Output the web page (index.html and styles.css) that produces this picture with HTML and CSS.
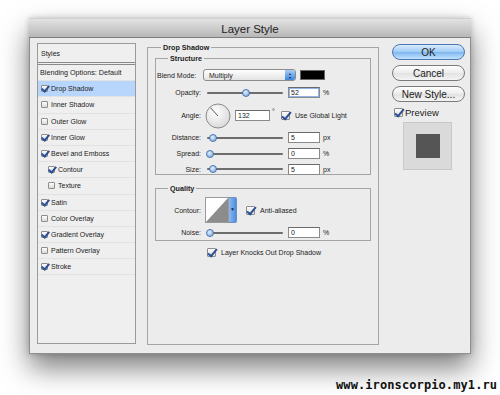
FILE: index.html
```html
<!DOCTYPE html>
<html lang="en">
<head>
  <meta charset="UTF-8">
  <title>Layer Style</title>
  <link rel="stylesheet" href="styles.css">
</head>
<body>

  <div class="window">
    <div class="titlebar">Layer Style</div>

    <div class="content">
      <div class="styles-list">
        <div class="list-head">Styles</div>
        <div class="list-row plain">Blending Options: Default</div>
        <div class="list-row selected"><span class="cb on"></span>Drop Shadow</div>
        <div class="list-row"><span class="cb"></span>Inner Shadow</div>
        <div class="list-row"><span class="cb"></span>Outer Glow</div>
        <div class="list-row"><span class="cb on"></span>Inner Glow</div>
        <div class="list-row"><span class="cb on"></span>Bevel and Emboss</div>
        <div class="list-row sub"><span class="cb on"></span>Contour</div>
        <div class="list-row sub"><span class="cb"></span>Texture</div>
        <div class="list-row"><span class="cb on"></span>Satin</div>
        <div class="list-row"><span class="cb"></span>Color Overlay</div>
        <div class="list-row"><span class="cb on"></span>Gradient Overlay</div>
        <div class="list-row"><span class="cb"></span>Pattern Overlay</div>
        <div class="list-row"><span class="cb on"></span>Stroke</div>
      </div>

      <fieldset class="group main">
        <legend>Drop Shadow</legend>

        <fieldset class="group inner structure">
          <legend>Structure</legend>

          <div class="row blend">
            <span class="label left">Blend Mode:</span>
            <span class="select">Multiply<span class="arrows">&#9650;<br>&#9660;</span></span>
            <span class="swatch"></span>
          </div>

          <div class="row opacity">
            <span class="label">Opacity:</span>
            <span class="slider"><span class="thumb" style="left: 48%"></span></span>
            <span class="field sel">52</span>
            <span class="unit">%</span>
          </div>

          <div class="row angle">
            <span class="label">Angle:</span>
            <svg class="dial" width="26" height="26" viewBox="0 0 26 26">
              <defs>
                <radialGradient id="dialfill" cx="40%" cy="35%" r="70%">
                  <stop offset="0" stop-color="#ffffff"/>
                  <stop offset="1" stop-color="#d8d8d8"/>
                </radialGradient>
              </defs>
              <circle cx="13" cy="13" r="12" fill="url(#dialfill)" stroke="#8a8a8a" stroke-width="1"/>
              <line x1="13" y1="13" x2="5.5" y2="4.7" stroke="#555" stroke-width="1"/>
            </svg>
            <span class="field wide">132</span>
            <span class="unit deg">&deg;</span>
            <span class="cb big on"></span>
            <span class="check-text">Use Global Light</span>
          </div>

          <div class="row distance">
            <span class="label">Distance:</span>
            <span class="slider"><span class="thumb" style="left: 4%"></span></span>
            <span class="field">5</span>
            <span class="unit">px</span>
          </div>

          <div class="row spread">
            <span class="label">Spread:</span>
            <span class="slider"><span class="thumb" style="left: 0%"></span></span>
            <span class="field">0</span>
            <span class="unit">%</span>
          </div>

          <div class="row size">
            <span class="label">Size:</span>
            <span class="slider"><span class="thumb" style="left: 4%"></span></span>
            <span class="field">5</span>
            <span class="unit">px</span>
          </div>
        </fieldset>

        <fieldset class="group inner quality">
          <legend>Quality</legend>

          <div class="row contour">
            <span class="label">Contour:</span>
            <span class="curve">
              <svg width="24" height="26" viewBox="0 0 24 26">
                <rect x="0.5" y="0.5" width="23" height="25" fill="#fff" stroke="#9a9a9a"/>
                <polygon points="1,25 23,1 23,25" fill="#8c8c8c"/>
              </svg>
              <span class="drop">&#9660;</span>
            </span>
            <span class="cb big on"></span>
            <span class="check-text">Anti-aliased</span>
          </div>

          <div class="row noise">
            <span class="label">Noise:</span>
            <span class="slider"><span class="thumb" style="left: 0%"></span></span>
            <span class="field">0</span>
            <span class="unit">%</span>
          </div>
        </fieldset>

        <div class="knockout">
          <span class="cb big on"></span>
          <span class="check-text">Layer Knocks Out Drop Shadow</span>
        </div>
      </fieldset>

      <div class="actions">
        <div class="btn default">OK</div>
        <div class="btn">Cancel</div>
        <div class="btn">New Style...</div>
        <div class="preview-toggle"><span class="cb big on"></span>Preview</div>
        <div class="preview"><div class="preview-square"></div></div>
      </div>
    </div>
  </div>

  <div class="watermark">www.ironscorpio.my1.ru</div>

</body>
</html>
```

FILE: styles.css
```css
* {
  box-sizing: border-box;
}
body {
  margin: 0;
  background: #fff;
  font-family: 'Liberation Sans', Arial, sans-serif;
  color: #222;
  padding: 18px 0 0 29px;
  width: 500px;
  height: 395px;
  overflow: hidden;
}

.window {
  width: 442px;
  height: 336px;
  background: #ececec;
  border: 1px solid #8f8f8f;
  border-top: none;
  box-shadow: 0 14px 26px rgba(0, 0, 0, 0.5), 0 0 6px rgba(0, 0, 0, 0.2);
}
.titlebar {
  height: 20px;
  line-height: 20px;
  text-align: center;
  font-size: 11.5px;
  color: #222;
  background: linear-gradient(#e2e2e2, #b8b8b8);
  border-bottom: 1px solid #7d7d7d;
  border-top: 1px solid #d0d0d0;
  margin: 0 -1px;
}

.content {
  display: flex;
  padding: 5px 0 0 7px;
}

/* left list */
.styles-list {
  width: 99px;
  height: 301px;
  border: 1px solid #9a9a9a;
  background: #efefef;
  font-size: 7px;
}
.list-head {
  height: 21px;
  line-height: 20px;
  padding-left: 3px;
  border-bottom: 3px double #8a8a8a;
}
.list-row {
  height: 16.2px;
  display: flex;
  align-items: center;
  padding-left: 3px;
  border-bottom: 1px solid #e2e2e2;
}
.list-row.plain {
  padding-left: 2px;
  font-size: 7.2px;
}
.list-row.sub {
  padding-left: 10px;
}
.list-row.selected {
  background: #b8d6fb;
}

/* checkboxes */
.cb {
  display: inline-block;
  width: 7px;
  height: 7px;
  margin-right: 3px;
  background: linear-gradient(#fdfdfd, #dcdcdc);
  border: 1px solid #8c8c8c;
  border-radius: 1px;
  position: relative;
  flex-shrink: 0;
}
.cb.on::after {
  content: "";
  position: absolute;
  left: 1px;
  top: -2px;
  width: 3px;
  height: 6px;
  border: solid #2a4f95;
  border-width: 0 2px 2px 0;
  transform: rotate(40deg);
}
.cb.big {
  width: 9px;
  height: 9px;
}
.cb.big.on::after {
  left: 2px;
  top: -2px;
  width: 3px;
  height: 8px;
}

/* groups */
.group {
  margin: 0;
  border: 1px solid #a4a4a4;
  font-size: 7px;
}
.group legend {
  font-weight: bold;
  font-size: 7.2px;
  padding: 0 2px;
  margin-left: 12px;
}
.main {
  margin-left: 11px;
  margin-top: 0;
  width: 232px;
  height: 302px;
  padding: 2px 7px 0 7px;
}
.main > legend {
  margin-left: 6px;
}
.inner {
  margin-left: 0;
  padding: 0;
}
.structure {
  height: 121px;
  padding-top: 4px;
}
.quality {
  margin-top: 9px;
  height: 57px;
  padding-top: 3px;
}

.row {
  display: flex;
  align-items: center;
  height: 16px;
}
.row.opacity {
  height: 19px;
}
.row.angle {
  height: 27px;
}
.row.distance {
  height: 17px;
}
.row.spread {
  height: 15px;
}
.label {
  width: 45px;
  text-align: right;
  margin-right: 4px;
  flex-shrink: 0;
}
.label.left {
  text-align: left;
  padding-left: 1px;
  margin-right: 2px;
}
.select {
  position: relative;
  width: 93px;
  height: 12px;
  line-height: 11px;
  padding-left: 5px;
  border: 1px solid #8d8d8d;
  border-radius: 3px;
  background: linear-gradient(#ffffff, #e3e3e3);
}
.arrows {
  position: absolute;
  right: 0;
  top: 0;
  bottom: 0;
  width: 10px;
  font-size: 3.5px;
  line-height: 4px;
  padding-top: 1.5px;
  text-align: center;
  color: #1a2b4a;
  background: linear-gradient(#a9cdf5, #3d86dc);
  border-radius: 0 2px 2px 0;
}
.swatch {
  width: 25px;
  height: 10px;
  margin-left: 4px;
  background: #000;
  border: 1px solid #666;
}

.slider {
  position: relative;
  width: 76px;
  height: 2px;
  margin-left: 2px;
  margin-right: 5px;
  background: #6d6d6d;
  border-radius: 1px;
}
.thumb {
  position: absolute;
  top: -3px;
  width: 8px;
  height: 8px;
  margin-left: -1px;
  border-radius: 50%;
  border: 1px solid #4a74ad;
  background: radial-gradient(circle at 40% 35%, #e4f0ff, #6b9ee0);
}
.field {
  width: 32px;
  height: 11px;
  line-height: 10px;
  padding-left: 2px;
  background: #fff;
  border: 1px solid #8a8a8a;
  border-top-color: #6a6a6a;
}
.field.sel {
  box-shadow: inset 0 0 0 1px #8fb7ea;
}
.field.wide {
  width: 35px;
  margin-left: 4px;
}
.unit {
  margin-left: 3px;
}
.unit.deg {
  margin-left: 2px;
  align-self: flex-start;
  margin-top: 6px;
  width: 9px;
}
.check-text {
  margin-left: 2px;
}

.contour {
  height: 28px;
}
.curve {
  display: flex;
  align-items: stretch;
  height: 26px;
  margin-right: 9px;
}
.curve svg {
  display: block;
}
.drop {
  width: 8px;
  font-size: 5px;
  padding-top: 8px;
  text-align: center;
  color: #172a4a;
  background: linear-gradient(90deg, #8fb9ee, #4c8ee0);
  border: 1px solid #6d8fbf;
  border-left: none;
  border-radius: 0 2px 2px 0;
}
.row.noise {
  height: 17px;
}

.knockout {
  display: flex;
  align-items: center;
  padding-left: 52px;
  margin-top: 7px;
  font-size: 7px;
}

/* right column */
.actions {
  display: flex;
  flex-direction: column;
  margin-left: 13px;
  width: 73px;
}
.btn {
  height: 16px;
  line-height: 15px;
  margin-bottom: 5px;
  text-align: center;
  font-size: 10px;
  border: 1px solid #7b7b7b;
  border-radius: 8px;
  background: linear-gradient(#ffffff, #ececec 50%, #e2e2e2 51%, #f4f4f4);
}
.btn.default {
  margin-top: 1px;
  border-color: #4d77b3;
  background: linear-gradient(#d9ecff, #9fcbf5 50%, #7fb6f0 51%, #c4e3ff);
}
.preview-toggle {
  display: flex;
  align-items: center;
  font-size: 9.5px;
  padding-left: 2px;
  margin-top: -2px;
  height: 14px;
}
.preview-toggle .cb {
  margin-right: 2px;
}
.preview {
  margin: 3px 0 0 11px;
  width: 49px;
  height: 48px;
  background: #dadada;
  border: 1px solid #c8c8c8;
  display: flex;
  align-items: center;
  justify-content: center;
}
.preview-square {
  width: 24px;
  height: 24px;
  background: #555;
}

.watermark {
  margin: 24px 0 0 307px;
  font-family: 'DejaVu Sans Mono', monospace;
  font-weight: bold;
  font-size: 12px;
  color: #111;
  letter-spacing: 0.1px;
}
```
